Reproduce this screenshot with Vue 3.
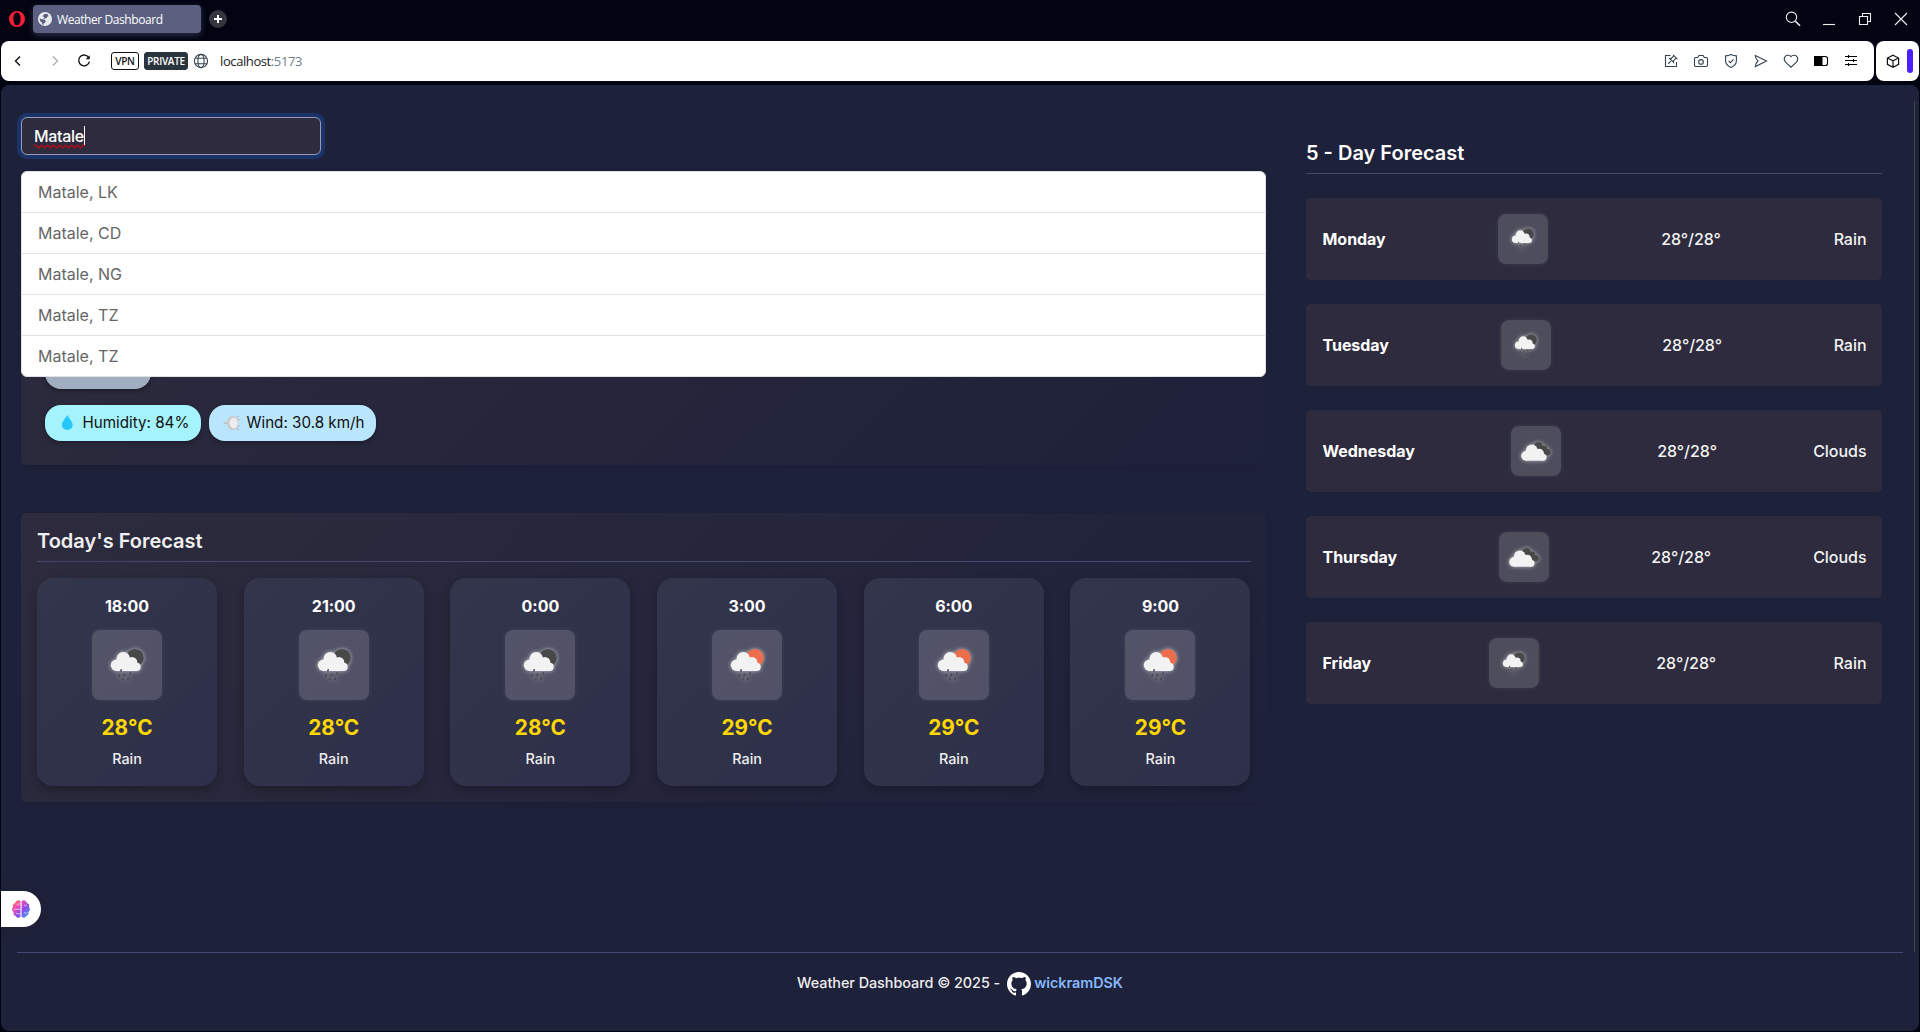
<script setup>
const cities = ['Matale, LK', 'Matale, CD', 'Matale, NG', 'Matale, TZ', 'Matale, TZ']
const hours = [
  { time: '18:00', temp: '28°C', sun: '#484848' },
  { time: '21:00', temp: '28°C', sun: '#484848' },
  { time: '0:00', temp: '28°C', sun: '#484848' },
  { time: '3:00', temp: '29°C', sun: '#ec6e4c' },
  { time: '6:00', temp: '29°C', sun: '#ec6e4c' },
  { time: '9:00', temp: '29°C', sun: '#ec6e4c' }
]
const days = [
  { name: 'Monday', text: 'Rain' },
  { name: 'Tuesday', text: 'Rain' },
  { name: 'Wednesday', text: 'Clouds' },
  { name: 'Thursday', text: 'Clouds' },
  { name: 'Friday', text: 'Rain' }
]
</script>

<template>
  <div class="window">
    <div class="tabbar">
      <svg class="opera" width="16" height="16" viewBox="0 0 16 16"><path fill="#fa1e35" fill-rule="evenodd" d="M8 0a8 8 0 1 0 0 16A8 8 0 0 0 8 0zM8 1.500c2.200 0 3.600 2.900 3.600 6.500S10.200 14.500 8 14.500 4.400 11.600 4.400 8 5.800 1.500 8 1.500z" /></svg>
      <div class="tab">
        <svg width="14" height="14" viewBox="0 0 14 14"><circle cx="7" cy="7" r="7" fill="#e8eaf0" /><path fill="#5b6080" d="M5.700 2.500 8 1.700l2 .9.500 1.600-1.300.5-.5 1.400-2 .6-1.200-.5.600-1.200-1.500-.8zM1.600 6.400l2.700.9 2 .3 1.500 1.300-.6 1.600-1.500.9-.4 1.500-1-.3-.2-2-1.700-1.200z" /></svg>
        <span>Weather Dashboard</span>
      </div>
      <svg class="plus" width="18" height="18" viewBox="0 0 18 18"><circle cx="9" cy="9" r="9" fill="#33353f" /><path d="M9 5v8M5 9h8" stroke="#fff" stroke-width="2" /></svg>
      <div class="wincontrols">
        <svg viewBox="0 0 16 16"><circle cx="6.500" cy="6.300" r="5.200" /><path d="m10.400 10.200 4.600 4.600" stroke-width="1.600" /></svg>
        <svg viewBox="0 0 16 16"><path d="M2 13.500h12" /></svg>
        <svg viewBox="0 0 16 16"><path d="M2.500 5.500h8v8h-8zM5.500 5.500v-3h8v8h-3" /></svg>
        <svg viewBox="0 0 16 16"><path d="m2 2 12 12M14 2 2 14" /></svg>
      </div>
    </div>

    <div class="toolrow">
      <div class="toolbar">
        <svg class="back" width="16" height="16" viewBox="0 0 16 16"><path d="M10 3.500 5.500 8l4.500 4.500" stroke="#111" stroke-width="1.400" /></svg>
        <svg class="fwd" width="16" height="16" viewBox="0 0 16 16"><path d="M6 3.500 10.500 8 6 12.500" stroke="#aaa" stroke-width="1.200" /></svg>
        <svg class="reload" width="16" height="16" viewBox="0 0 16 16"><path d="M12.900 4.900A5.400 5.400 0 1 0 13.400 8.600" stroke="#111" stroke-width="1.400" /><path d="M13.700 2.300v4H9.600z" fill="#111" /></svg>
        <span class="vpn">VPN</span>
        <span class="private">PRIVATE</span>
        <svg class="globe" width="16" height="16" viewBox="0 0 16 16"><g stroke="#35444f" stroke-width="1.100"><circle cx="8" cy="8" r="6.600" /><ellipse cx="8" cy="8" rx="3.100" ry="6.600" /><path d="M2.300 5.300h11.400M2.300 10.700h11.400" /></g></svg>
        <span class="url">localhost<i>:5173</i></span>
        <div class="tools">
          <svg viewBox="0 0 16 16"><path d="M7.500 2.500h-5v11h11V9M5.200 10.800l2.600-2.600M10.600 2.300l3.200 3.200-1.300.2-2 2 .1 1.700-4-4 1.700.1 2-2z" /></svg>
          <svg viewBox="0 0 16 16"><path d="M2.700 4.500h2l1.200-2h4.200l1.200 2h2q1.200 0 1.200 1.200v6.600q0 1.200-1.200 1.200H2.700q-1.200 0-1.200-1.200V5.700q0-1.200 1.200-1.200z" /><circle cx="8" cy="8.900" r="2.300" /></svg>
          <svg viewBox="0 0 16 16"><path d="M8 1.600q2.500 1.200 5.400 1.300V8c0 3-2.200 5-5.400 6.400C4.800 13 2.600 11 2.600 8V2.900Q5.500 2.800 8 1.600zM5.600 7.900l1.800 1.800 3.200-3.300" /></svg>
          <svg viewBox="0 0 16 16"><path d="M2.300 2.400 13.600 8 2.300 13.600c-.2-2.200.6-3.700 2.600-5.600C2.900 6.100 2.100 4.600 2.300 2.400z" /></svg>
          <svg viewBox="0 0 16 16"><path d="M8 3.600C9.400 1.900 12 1.700 13.500 3.200c1.600 1.700 1.400 4.200 0 6L8 14.200 2.500 9.200c-1.400-1.800-1.600-4.300 0-6C4 1.700 6.600 1.900 8 3.600z" /></svg>
          <svg viewBox="0 0 16 16"><path fill="#000" stroke="none" d="M1 3h8.500v10H1z" /><path stroke="#000" d="M9 3.500h3.200q2.300 0 2.300 2.300v4.400q0 2.300-2.300 2.300H9" /></svg>
          <svg viewBox="0 0 16 16"><path stroke="#000" d="M2 3.500h12M2 7.500h12M2 11.500h12M5.500 2v3M10.500 6v3M5.500 10v3" /></svg>
        </div>
      </div>
      <div class="sidebox">
        <svg width="16" height="16" viewBox="0 0 16 16"><path stroke="#111" stroke-width="1.200" d="M8 2.200 13.600 5v6.300L8 14.300 2.400 11.300V5zM2.400 5 8 7.800 13.600 5M8 7.800v6.500" /></svg>
        <b></b>
      </div>
    </div>

    <div class="page">
      <div class="columns">
        <main class="left">
          <div class="search"><span class="query">Matale<svg class="squiggle" width="51" height="5" viewBox="0 0 51 5"><path d="M0 2.500q1.500-3 3 0t3 0 3 0 3 0 3 0 3 0 3 0 3 0 3 0 3 0 3 0 3 0 3 0 3 0 3 0 3 0 3 0" /></svg></span><span class="caret"></span></div>
          <div class="current">
            <ul class="suggestions">
              <li v-for="(c, i) in cities" :key="i">{{ c }}</li>
            </ul>
            <div class="condition"></div>
            <div class="chips">
              <span class="chip humidity"><svg width="19" height="18" viewBox="0 0 19 18"><path fill="#26c6fb" d="M9.300 1C11 4.500 14.700 7.700 14.700 11a5.400 5 0 0 1-10.800 0C3.900 7.700 7.600 4.500 9.300 1z" /></svg>Humidity: 84%</span>
              <span class="chip wind"><svg width="19" height="18" viewBox="0 0 19 18"><path d="M1.500 8.200h7v1.600h-7z" fill="#c0bec0" /><ellipse cx="10.800" cy="9" rx="5.800" ry="7" fill="#c9c7ca" /><ellipse cx="11.600" cy="9" rx="4.200" ry="5.400" fill="#ececee" /><g fill="#b9b9bd"><circle cx="15.800" cy="2.600" r="1" /><circle cx="17" cy="5.600" r=".8" /><circle cx="17.200" cy="12" r=".8" /><circle cx="15.800" cy="15.600" r="1" /></g></svg>Wind: 30.8 km/h</span>
            </div>
          </div>
          <section class="today">
            <h2>Today's Forecast</h2>
            <div class="cards">
              <div v-for="h in hours" :key="h.time" class="card">
                <strong>{{ h.time }}</strong>
                <div class="icon big">
                  <svg viewBox="0 0 70 70">
                    <circle cx="43" cy="27.700" r="8.800" :fill="h.sun" />
                    <g fill="#f2f2f2"><circle cx="24.500" cy="35.300" r="5.700" /><circle cx="31.300" cy="28.800" r="6.800" /><circle cx="40" cy="32.200" r="5.300" /><circle cx="44.600" cy="36.900" r="4.100" /><path d="M24.500 32h20.100v9H24.500z" /></g>
                    <path stroke="#484848" stroke-width="1.500" stroke-linecap="round" d="m29.200 39.800-.4 1.100M38.300 42.700l-.4 1M27.300 45l-.5 1.400M32.600 44.200l-.7 1.700M31 48.700l-.3.700M36.300 48.200l-.6 1.400" />
                  </svg>
                </div>
                <span class="temp">{{ h.temp }}</span>
                <span class="desc">Rain</span>
              </div>
            </div>
          </section>
        </main>

        <aside class="right">
          <h2>5 - Day Forecast</h2>
          <div v-for="d in days" :key="d.name" class="day">
            <strong>{{ d.name }}</strong>
            <div class="icon">
              <svg v-if="d.text === 'Rain'" viewBox="0 0 50 50">
                <g transform="translate(1.360 1.650) scale(.667)">
                  <circle cx="43" cy="27.700" r="8.600" fill="#484848" />
                  <g fill="#f2f2f2"><circle cx="24.500" cy="35.300" r="5.700" /><circle cx="31.300" cy="28.800" r="6.800" /><circle cx="40" cy="32.200" r="5.300" /><circle cx="44.600" cy="36.900" r="4.100" /><path d="M24.500 32h20.100v9H24.500z" /></g>
                  <path stroke="#484848" stroke-width="1.500" stroke-linecap="round" d="m29.200 39.800-.4 1.100M38.300 42.700l-.4 1M27.300 45l-.5 1.400M32.600 44.200l-.7 1.700M31 48.700l-.3.700M36.300 48.200l-.6 1.400" />
                </g>
              </svg>
              <svg v-else viewBox="0 0 50 50">
                <g fill="#484848"><circle cx="27.500" cy="20.400" r="4.300" /><circle cx="32.800" cy="22.800" r="3.400" /><circle cx="36.300" cy="26.300" r="3.300" /></g>
                <g fill="#f2f2f2"><circle cx="15" cy="29.900" r="4.800" /><circle cx="20.800" cy="24.300" r="5.900" /><circle cx="28.200" cy="27.300" r="4.600" /><circle cx="32" cy="31.200" r="3.500" /><path d="M15 27.500h17v7.200H15z" /></g>
              </svg>
            </div>
            <span>28°/28°</span>
            <span>{{ d.text }}</span>
          </div>
        </aside>
      </div>

      <footer>
        <span>Weather Dashboard © 2025 -</span>
        <svg width="24" height="24" viewBox="0 0 16 16"><path fill="#fff" d="M8 0C3.580 0 0 3.580 0 8c0 3.540 2.290 6.530 5.470 7.590.4.070.55-.17.55-.38 0-.19-.01-.82-.01-1.490-2.010.37-2.530-.49-2.690-.94-.09-.23-.48-.94-.82-1.130-.28-.15-.68-.52-.01-.53.630-.01 1.080.58 1.230.82.720 1.210 1.870.87 2.330.66.070-.52.280-.87.510-1.070-1.780-.2-3.640-.89-3.640-3.950 0-.87.310-1.590.82-2.150-.08-.2-.36-1.020.08-2.120 0 0 .67-.21 2.200.82.640-.18 1.320-.27 2-.27s1.360.09 2 .27c1.530-1.040 2.200-.82 2.200-.82.440 1.100.16 1.920.08 2.120.51.560.82 1.270.82 2.150 0 3.070-1.870 3.750-3.650 3.950.290.25.54.73.54 1.480 0 1.070-.01 1.930-.01 2.200 0 .21.150.46.550.38A8.010 8.010 0 0 0 16 8c0-4.420-3.580-8-8-8z" /></svg>
        <a>wickramDSK</a>
      </footer>

      <div class="rail"></div>
      <div class="brain">
        <svg width="20" height="20" viewBox="0 0 20 20">
          <defs><linearGradient id="brainfill" x1="0" y1="0" x2="1" y2="1"><stop offset="0" stop-color="#ff9a3d" /><stop offset=".3" stop-color="#f14fae" /><stop offset=".6" stop-color="#8a4be8" /><stop offset="1" stop-color="#2fb4ff" /></linearGradient></defs>
          <path fill="url(#brainfill)" d="M9.500 2.500v15.200c-1.500 1.600-4 1.200-4.700-.8C2.800 16.700 2 14.800 2.700 13.200.8 12 .600 9.500 2 8 1.200 5.800 2.500 4.200 4.200 3.900 5 1 8.200.4 9.500 2.500zM10.600 2.500c1.300-2.100 4.500-1.500 5.200 1.400 1.800.3 3 1.900 2.200 4.100 1.400 1.500 1.200 4-.7 5.200.7 1.600-.1 3.500-2.100 3.700-.7 2-3.200 2.400-4.600.8z" />
          <path fill="none" stroke="#fff" stroke-opacity=".8" stroke-width=".8" d="M9.500 5H7.500L5.800 6.500M3 10.300h6.500M4.800 13.800q1 1.400 3 1H9.500M13 5.800l1.600 1.400 1.400-1.400M13.200 13.200l1.400 1.600 1.400-1.600" />
        </svg>
      </div>
    </div>
  </div>
</template>

<style>
body { margin: 0; overflow: hidden; background: #020412; }
</style>

<style scoped>
* { box-sizing: border-box; }
.window { width: 1920px; height: 1032px; background: #020412; display: flex; flex-direction: column; font-family: Inter, sans-serif; overflow: hidden; }
svg { flex: none; display: block; fill: none; }

.tabbar { height: 41px; flex: none; display: flex; align-items: center; padding: 0 1px 3px 9px; font-family: "Open Sans", sans-serif; }
.tab { width: 168px; height: 28px; margin-left: 8px; padding-left: 5px; border-radius: 4px; background: #5b6080; color: #fff; font-size: 12px; display: flex; align-items: center; gap: 5px; box-shadow: 0 2px 6px rgba(91, 96, 128, .5); letter-spacing: -.42px; }
.plus { margin-left: 8px; }
.wincontrols { margin-left: auto; display: flex; }
.wincontrols svg { width: 36px; height: 16px; stroke: #eee; stroke-width: 1.100; }

.toolrow { display: flex; gap: 2px; height: 40px; flex: none; margin: 0 1px 4px; }
.toolbar { width: 1873px; background: #fff; border-radius: 8px; display: flex; align-items: center; padding: 0 8px 0 9px; font-family: "Open Sans", sans-serif; }
.fwd { margin-left: 21px; }
.reload { margin-left: 13px; }
.vpn, .private { height: 18px; border-radius: 3px; font-size: 10px; font-weight: 600; line-height: 16px; text-align: center; border: 1px solid #111; letter-spacing: -.3px; }
.vpn { width: 28px; margin-left: 19px; color: #111; }
.private { width: 44px; margin-left: 5px; background: #29343d; border-color: #29343d; color: #fff; }
.globe { margin-left: 5px; }
.url { margin-left: 11px; font-size: 13px; color: #1b1b1b; letter-spacing: -.4px; }
.url i { font-style: normal; color: #71808c; }
.tools { margin-left: auto; display: flex; }
.tools svg { width: 30px; height: 16px; stroke: #35444f; stroke-width: 1.100; }
.sidebox { flex: 1; background: #fff; border-radius: 8px; display: flex; align-items: center; justify-content: flex-end; gap: 6px; padding-right: 6px; }
.sidebox b { width: 6px; height: 24px; border-radius: 3px; background: #4c1fff; }

.page { position: relative; width: 1918px; height: 946px; margin-left: 1px; background: #1e213a; border-radius: 8px; color: #fff; display: flex; flex-direction: column; font-size: 16px; line-height: 24px; }
.columns { display: flex; height: 867px; flex: none; padding-left: 20px; }
.left { width: 1245px; padding-top: 32px; display: flex; flex-direction: column; }
.search { width: 300px; height: 38px; flex: none; border: 1px solid #959bb4; border-radius: 6px; background: #2d2b3d; box-shadow: 0 0 0 4px #1a346a; padding: 0 12px; display: flex; align-items: center; font-weight: 500; letter-spacing: -.3px; }
.query { position: relative; }
.squiggle { position: absolute; left: 0; bottom: -1px; stroke: #e00010; stroke-width: 1.200; }
.caret { width: 1px; height: 20px; background: #fff; }
.current { position: relative; flex: none; margin-top: 16px; height: 294px; border-radius: 5px; background: linear-gradient(135deg, #2d2b3d, #1e213a); padding: 182px 24px 0; box-shadow: 0 4px 10px rgba(0, 0, 0, .06); }
.suggestions { position: absolute; left: 0; top: 0; width: 1245px; margin: 0; padding: 0; list-style: none; border: 1px solid #dee2e6; border-radius: 6px; background: #fff; color: #666; overflow: hidden; }
.suggestions li { padding: 8px 16px; height: 41px; border-bottom: 1px solid #dee2e6; }
.suggestions li:last-child { height: 40px; border-bottom: 0; }
.condition { width: 106px; height: 36px; border-radius: 16px; background: #a0aec0; box-shadow: 0 2px 4px rgba(0, 0, 0, .3); }
.chips { display: flex; gap: 8px; margin-top: 16px; }
.chip { height: 36px; border-radius: 16px; display: flex; align-items: center; gap: 5.500px; padding-left: 13px; color: #111; font-size: 15.200px; white-space: nowrap; box-shadow: 0 2px 4px rgba(0, 0, 0, .3); }
.humidity { width: 156px; background: #a5f3fc; }
.wind { width: 167px; background: #bae6fd; }

.today { flex: none; margin-top: 48px; height: 289px; border-radius: 5px; background: linear-gradient(135deg, #2d2b3d, #1e213a); padding: 16px 15.500px 16px 16px; box-shadow: 0 4px 10px rgba(0, 0, 0, .06); }
h2 { margin: 0; font-size: 20px; font-weight: 600; line-height: 24px; color: #f0f0f0; border-bottom: 1px solid #464770; padding-bottom: 8px; }
.today h2 { height: 33px; }
.cards { display: flex; justify-content: space-between; margin-top: 16px; }
.card { width: 180px; height: 208px; border-radius: 16px; background: linear-gradient(135deg, #33354b, #2e304a); box-shadow: 0 4px 10px rgba(0, 0, 0, .25); display: flex; flex-direction: column; align-items: center; padding-top: 16px; }
.card strong { font-weight: 650; letter-spacing: -.05px; }
.icon { width: 50px; height: 50px; border-radius: 8px; background: rgba(255, 255, 255, .16); box-shadow: 0 0 5px rgba(255, 255, 255, .08); }
.icon svg { width: 100%; height: 100%; filter: drop-shadow(0 0 2px rgba(255, 255, 255, .6)); }
.big { width: 70px; height: 70px; margin-top: 12px; }
.temp { margin-top: 12px; font-size: 20.800px; font-weight: 700; line-height: 31px; color: #ffd700; }
.desc { margin-top: 5px; font-size: 14.400px; line-height: 22px; font-weight: 500; color: #eee; }

.right { width: 576px; margin-left: 40px; padding-top: 56px; }
.right h2 { height: 33px; color: #fff; margin-bottom: 24px; }
.day { height: 82px; margin-bottom: 24px; border-radius: 5px; background: #2d2b3d; padding: 0 15.500px 0 16.500px; display: flex; align-items: center; justify-content: space-between; color: #f3f3f3; font-weight: 500; letter-spacing: -.04px; }
.day strong { font-weight: 650; color: #fff; }

footer { margin: 0 16px; height: 79px; border-top: 1px solid #464770; display: flex; justify-content: center; padding-top: 18px; font-size: 14.400px; font-weight: 500; color: #eee; letter-spacing: -.04px; }
footer svg { margin: 1px 3px 0 7px; }
footer a { color: #86b9fb; font-weight: 600; }
.rail { position: absolute; left: 1913px; top: 16px; width: 1px; height: 851px; background: #44434a; }
.brain { position: absolute; left: 0; top: 806px; width: 40px; height: 36px; border-radius: 0 18px 18px 0; background: #fff; display: flex; align-items: center; padding-left: 10px; box-shadow: 0 0 16px rgba(40, 25, 40, .3); }
</style>
